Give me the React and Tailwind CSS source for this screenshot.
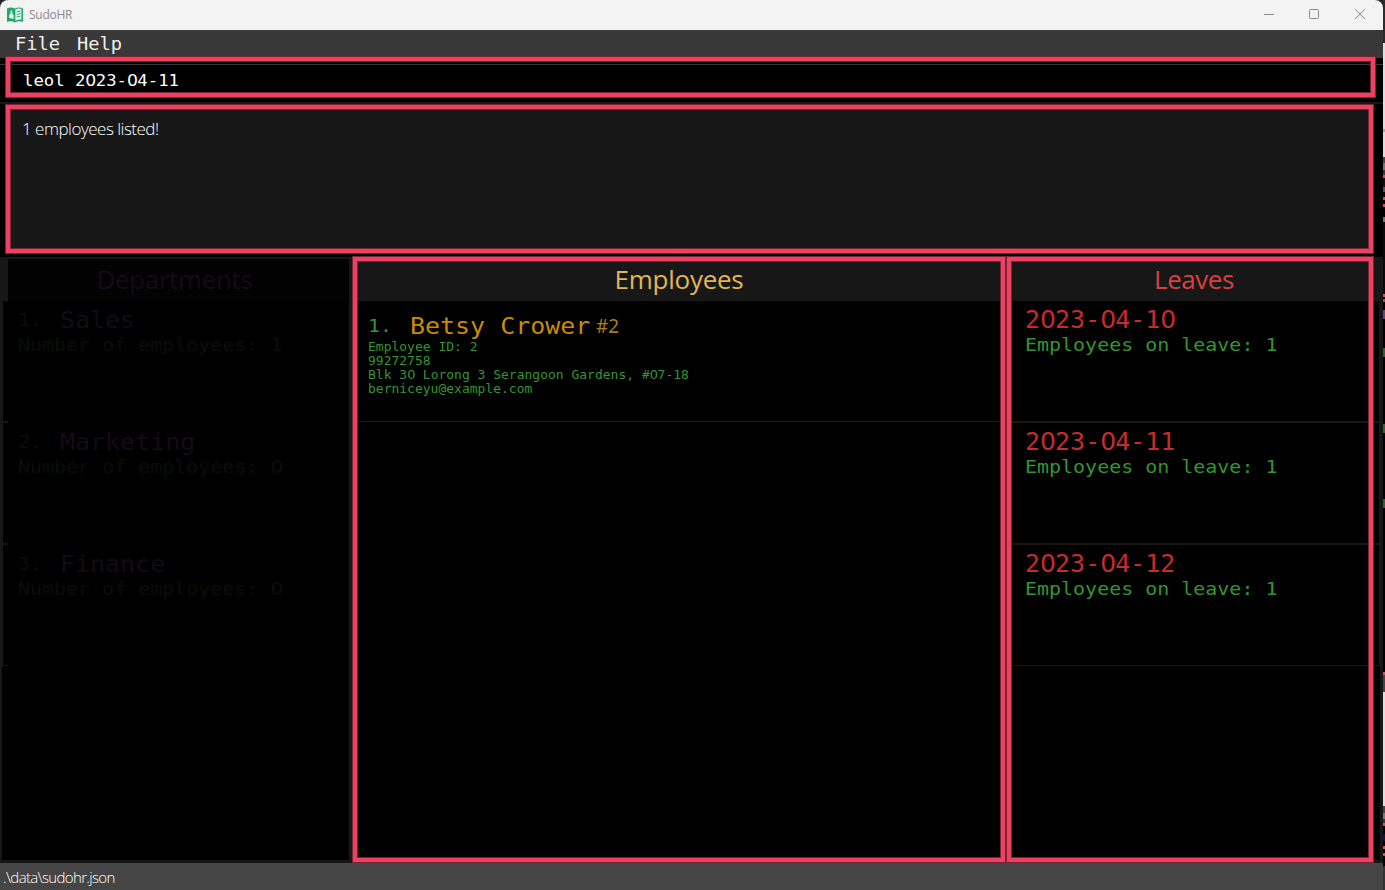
import React from "react";

// Wide monospaced text with plain (undotted) zeros.
function Mono({ children, stretch = "scale-x-[1.141]", className = "" }) {
  return (
    <span
      className={`inline-block origin-left self-start whitespace-pre font-['DejaVu_Sans_Mono',monospace] ${stretch} ${className}`}
    >
      {children.split(/(0)/).map((part, i) =>
        part === "0" ? (
          <span key={i} className="font-['DejaVu_Sans',sans-serif] leading-none tracking-[-0.034em]">0</span>
        ) : (
          part
        )
      )}
    </span>
  );
}

const departments = [
  { name: "Sales", count: 1 },
  { name: "Marketing", count: 0 },
  { name: "Finance", count: 0 },
];

const leaves = ["2023-04-10", "2023-04-11", "2023-04-12"];

// Slivers of the window behind, visible at the right edge.
const slivers = [
  [43, "bg-[#2b2b2b]"], [86, "bg-[#dedede]"], [3, "bg-[#a8a8a8]"], [25, "bg-[#dedede]"],
  [6, "bg-[#444444]"], [7, "bg-[#777777]"], [5, "bg-[#383838]"], [3, "bg-[#ee4160]"],
  [9, "bg-[#111111]"], [5, "bg-[#555555]"], [5, "bg-black"], [3, "bg-[#ee4160]"],
  [4, "bg-black"], [3, "bg-[#ee4160]"], [10, "bg-black"], [5, "bg-[#777770]"],
  [72, "bg-[#090909]"], [3, "bg-[#ee4160]"], [2, "bg-black"], [3, "bg-[#b83a54]"],
  [8, "bg-black"], [9, "bg-[#65408a]"], [29, "bg-black"], [9, "bg-[#276a27]"],
  [67, "bg-black"], [9, "bg-[#276a27]"], [66, "bg-black"], [9, "bg-[#276a27]"],
  [164, "bg-black"], [3, "bg-[#ee4160]"], [17, "bg-[#444444]"], [114, "bg-[#dedede]"],
  [7, "bg-[#444444]"], [6, "bg-[#777777]"], [4, "bg-[#383838]"], [3, "bg-[#ee4160]"],
  [8, "bg-black"], [7, "bg-[#11115a]"], [5, "bg-black"], [3, "bg-[#ee4160]"],
  [4, "bg-black"], [3, "bg-[#ee4160]"], [10, "bg-black"], [33, "bg-[#333333]"],
];

function Highlight({ className }) {
  return (
    <div
      className={`pointer-events-none absolute border-4 border-[#ee4160] shadow-[0_0_0_1px_#77263a,inset_0_0_0_1px_#77263a] ${className}`}
    />
  );
}

function Logo() {
  return (
    <svg width="16" height="16" viewBox="0 0 16 16">
      <path d="M0 1.5Q4-.5 8 1.5Q12-.5 16 1.5V15Q12 13.2 8 15.5Q4 13.2 0 15Z" fill="#1faa6c" />
      <path d="M8.4 2.4Q11.4.9 14.4 2V12.6Q11.4 12 8.4 13.8Z" fill="#effaf4" />
      <path d="M9.6 5.1L13.6 4M9.6 7.6L13.6 6.5M9.6 10.1L13.6 9" stroke="#1faa6c" strokeWidth="1" />
      <path d="M3.6 3.6H5.2V6.4L6.6 8.2V12L2 10.8V8.2L3.6 6.4Z" fill="#effaf4" />
    </svg>
  );
}

export default function App() {
  return (
    <div className="relative flex h-[890px] w-[1385px] overflow-hidden bg-[#242424] font-['Open_Sans',sans-serif]">
      <div className="flex w-[1383px] flex-col overflow-hidden rounded-t-lg bg-black">
        <header className="flex h-[30px] shrink-0 items-center bg-[#f3f3f3] pl-[7px] pr-[16px]">
          <Logo />
          <span className="ml-[6px] text-[12px] tracking-[-0.25px] text-[#8c8c8c]">SudoHR</span>
          <svg className="ml-auto" width="104" height="12" viewBox="0 0 104 12" fill="none" stroke="#8a8a8a">
            <path d="M1 5.5H11" />
            <rect x="46.5" y="0.5" width="9" height="9" rx="1" />
            <path d="M92 .2L102 10M102 .2L92 10" />
          </svg>
        </header>

        <nav className="flex h-7 shrink-0 gap-[20.5px] bg-[#383838] pl-[15px] text-[17.4px] text-[#efefef]">
          <Mono stretch="scale-x-[1.075]" className="leading-[28px]">File</Mono>
          <Mono stretch="scale-x-[1.075]" className="leading-[28px]">Help</Mono>
        </nav>

        <div className="flex h-[44px] shrink-0 flex-col pt-[6px]">
          <div className="flex h-[32px] border-t border-[#383838] pl-[23px] text-[16.3px] text-white">
            <Mono stretch="scale-x-[1.06]" className="leading-[31px]">leol 2023-04-11</Mono>
          </div>
        </div>

        <div className="h-[155px] shrink-0 border-t-2 border-[#171717] pl-[8px] pr-[14px] pt-[4px]">
          <div className="h-[143px] bg-[#171717] pl-[14px] pt-[9px] text-[17px] font-light leading-6 tracking-[-0.5px] text-white">
            1 employees listed!
          </div>
        </div>

        <main className="flex h-[606px] shrink-0 bg-[#171717]">
          <section className="flex w-[353px] flex-col pb-[3px] pl-[2px] pr-[4px] pt-[2px]">
            <h2 className="ml-[6px] flex h-[42px] shrink-0 items-center justify-center bg-[#020202] pb-[2px] pr-[8px] text-[26px] font-medium tracking-[-0.35px] text-[#130b18]">
              Departments
            </h2>
            {departments.map((d, i) => (
              <div key={d.name} className="flex h-[122px] shrink-0 flex-col border-l border-[#171717] bg-black">
                <div className="flex h-[120px] shrink-0 flex-col pl-[15px] pt-[5px]">
                  <div className="flex h-7 text-[#071007]">
                    <div className="w-[42px] shrink-0">
                      <Mono className="text-[17.5px] leading-[28px]">{`${i + 1}.`}</Mono>
                    </div>
                    <Mono stretch="scale-x-[1.1]" className="text-[22.7px] leading-[28px] text-[#150a18]">{d.name}</Mono>
                  </div>
                  <Mono className="text-[17.5px] leading-[22px] text-[#071007]">{`Number of employees: ${d.count}`}</Mono>
                </div>
                <div className={`w-[5px] bg-[#171717] ${i === 2 ? "h-px" : "h-[2px]"}`} />
              </div>
            ))}
            <div className="flex-1 bg-black" />
          </section>

          <section className="flex w-[652px] flex-col pb-[4px] pl-[4px] pr-[4px]">
            <h2 className="flex h-[44px] shrink-0 items-center justify-center text-[26px] font-medium tracking-[-0.25px] text-[#e1b558]">
              Employees
            </h2>
            <div className="flex h-[121px] shrink-0 flex-col border-b border-[#171717] bg-black pl-[11px] pt-[11px] text-[#339533]">
              <div className="flex h-[28px]">
                <div className="w-[42px] shrink-0">
                  <Mono className="text-[17.5px] leading-[29px]">1.</Mono>
                </div>
                <Mono stretch="scale-x-[1.1]" className="text-[22.7px] leading-[28px] text-[#c98b00]">Betsy Crower</Mono>
                <span className="ml-[22px] font-['Noto_Sans',sans-serif] text-[19px] leading-[29px] text-[#a97c1b]">#2</span>
              </div>
              <div className="flex flex-col text-[11.4px]">
                <Mono className="leading-[14px]">Employee ID: 2</Mono>
                <Mono className="leading-[14px]">99272758</Mono>
                <Mono className="leading-[14px]">Blk 30 Lorong 3 Serangoon Gardens, #07-18</Mono>
                <Mono className="leading-[14px]">berniceyu@example.com</Mono>
              </div>
            </div>
            <div className="flex-1 bg-black" />
          </section>

          <section className="flex w-[378px] flex-col pb-[3px] pl-[4px] pr-[3px]">
            <h2 className="flex h-[44px] shrink-0 items-center justify-center pr-[1px] text-[26px] font-medium tracking-[-0.45px] text-[#dc3f40]">
              Leaves
            </h2>
            {leaves.map((date, i) => (
              <div
                key={date}
                className={`mr-[1px] flex shrink-0 flex-col border-[#171717] bg-black pl-[16px] pt-[5px] ${
                  i === 2 ? "h-[121px] border-b" : "h-[122px] border-b-2"
                }`}
              >
                <Mono stretch="scale-x-[1.04]" className="text-[24px] leading-[28px] text-[#c52c2c]">{date}</Mono>
                <Mono className="text-[17.5px] leading-[22px] text-[#339533]">Employees on leave: 1</Mono>
              </div>
            ))}
            <div className="flex-1 bg-black" />
          </section>
        </main>

        <footer className="flex h-[27px] shrink-0 items-center bg-[#454545] pl-[3px] pt-[2px] text-[15px] font-light tracking-[-0.66px] text-white">
          .\data\sudohr.json
        </footer>
      </div>

      <div className="flex w-[2px] flex-col">
        {slivers.map(([height, color], i) => (
          <div key={i} className={`shrink-0 ${color}`} style={{ height }} />
        ))}
      </div>

      <Highlight className="left-[6px] top-[57px] h-[40px] w-[1369px]" />
      <Highlight className="left-[6px] top-[105px] h-[148px] w-[1367px]" />
      <Highlight className="left-[353px] top-[257px] h-[605px] w-[652px]" />
      <Highlight className="left-[1007px] top-[257px] h-[605px] w-[366px]" />
    </div>
  );
}
